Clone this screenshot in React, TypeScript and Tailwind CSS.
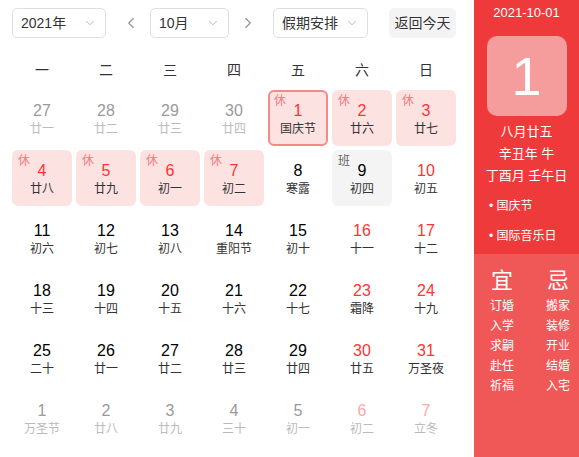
import { ChevronDown, ChevronLeft, ChevronRight } from 'lucide-react';

type Day = {
  n: number;
  lunar: string;
  kind?: 'prev' | 'next';
  red?: boolean;
  rest?: boolean;
  work?: boolean;
  selected?: boolean;
};

const weeks: Day[][] = [
  [
    { n: 27, lunar: '廿一', kind: 'prev' },
    { n: 28, lunar: '廿二', kind: 'prev' },
    { n: 29, lunar: '廿三', kind: 'prev' },
    { n: 30, lunar: '廿四', kind: 'prev' },
    { n: 1, lunar: '国庆节', red: true, rest: true, selected: true },
    { n: 2, lunar: '廿六', red: true, rest: true },
    { n: 3, lunar: '廿七', red: true, rest: true },
  ],
  [
    { n: 4, lunar: '廿八', red: true, rest: true },
    { n: 5, lunar: '廿九', red: true, rest: true },
    { n: 6, lunar: '初一', red: true, rest: true },
    { n: 7, lunar: '初二', red: true, rest: true },
    { n: 8, lunar: '寒露' },
    { n: 9, lunar: '初四', work: true },
    { n: 10, lunar: '初五', red: true },
  ],
  [
    { n: 11, lunar: '初六' },
    { n: 12, lunar: '初七' },
    { n: 13, lunar: '初八' },
    { n: 14, lunar: '重阳节' },
    { n: 15, lunar: '初十' },
    { n: 16, lunar: '十一', red: true },
    { n: 17, lunar: '十二', red: true },
  ],
  [
    { n: 18, lunar: '十三' },
    { n: 19, lunar: '十四' },
    { n: 20, lunar: '十五' },
    { n: 21, lunar: '十六' },
    { n: 22, lunar: '十七' },
    { n: 23, lunar: '霜降', red: true },
    { n: 24, lunar: '十九', red: true },
  ],
  [
    { n: 25, lunar: '二十' },
    { n: 26, lunar: '廿一' },
    { n: 27, lunar: '廿二' },
    { n: 28, lunar: '廿三' },
    { n: 29, lunar: '廿四' },
    { n: 30, lunar: '廿五', red: true },
    { n: 31, lunar: '万圣夜', red: true },
  ],
  [
    { n: 1, lunar: '万圣节', kind: 'next' },
    { n: 2, lunar: '廿八', kind: 'next' },
    { n: 3, lunar: '廿九', kind: 'next' },
    { n: 4, lunar: '三十', kind: 'next' },
    { n: 5, lunar: '初一', kind: 'next' },
    { n: 6, lunar: '初二', kind: 'next', red: true },
    { n: 7, lunar: '立冬', kind: 'next', red: true },
  ],
];

const good = ['订婚', '入学', '求嗣', '赴任', '祈福'];
const bad = ['搬家', '装修', '开业', '结婚', '入宅'];

const Select = ({ label, width }: { label: string; width: string }) => (
  <div
    className={`${width} h-[30px] flex items-center justify-between pl-[8px] pr-[8px] border border-[#dcdfe6] rounded-[5px] text-[14px] text-[#333]`}
  >
    <span>{label}</span>
    <ChevronDown size={14} strokeWidth={1.5} className="text-[#a8abb2]" />
  </div>
);

const Cell = ({ d }: { d: Day }) => {
  let box = 'border-2 border-transparent';
  if (d.rest) box = 'bg-[#fde2e2] border-2 border-[#fde2e2]';
  if (d.selected) box = 'bg-[#fde2e2] border-2 border-[#f38a8a]';
  if (d.work) box = 'bg-[#f4f4f5] border-2 border-[#f4f4f5]';

  let num = 'text-black';
  let lunar = 'text-[#333]';
  if (d.red) num = 'text-[#f33]';
  if (d.kind) {
    num = d.red ? 'text-[#fbaaaa]' : 'text-[#9a9a9a]';
    lunar = 'text-[#bbb]';
  }

  return (
    <div className={`relative m-[2px] rounded-[6px] flex flex-col items-center justify-center pt-[4px] ${box}`}>
      {d.rest && <span className="absolute top-[1px] left-[4px] text-[12px] leading-[16px] text-[#f47a7a]">休</span>}
      {d.work && <span className="absolute top-[1px] left-[4px] text-[12px] leading-[16px] text-[#666]">班</span>}
      <span className={`text-[16px] leading-[18px] ${num}`}>{d.n}</span>
      <span className={`text-[12px] leading-[18px] ${lunar}`}>{d.lunar}</span>
    </div>
  );
};

export default function App() {
  return (
    <div
      className="flex w-[579px] h-[457px] bg-white overflow-hidden"
      style={{ fontFamily: '"Liberation Sans", "Noto Sans CJK SC", sans-serif' }}
    >
      <div className="w-[474px] flex flex-col">
        <div className="flex items-center pt-[8px] pl-[12px]">
          <Select label="2021年" width="w-[94px]" />
          <div className="ml-[16px] mr-[10px] text-[#909399]">
            <ChevronLeft size={18} strokeWidth={1.5} />
          </div>
          <Select label="10月" width="w-[79px]" />
          <div className="ml-[10px] mr-[16px] text-[#909399]">
            <ChevronRight size={18} strokeWidth={1.5} />
          </div>
          <Select label="假期安排" width="w-[95px]" />
          <div className="ml-[21px] w-[67px] h-[30px] flex items-center justify-center rounded-[5px] bg-[#f4f4f5] text-[14px] text-[#333]">
            返回今天
          </div>
        </div>

        <div className="grid grid-cols-[repeat(7,64px)] px-[10px] mt-[14px] h-[36px] items-center">
          {['一', '二', '三', '四', '五', '六', '日'].map((w) => (
            <div key={w} className="text-center text-[14px] text-[#333]">
              {w}
            </div>
          ))}
        </div>

        <div className="grid grid-cols-[repeat(7,64px)] auto-rows-[60px] px-[10px]">
          {weeks.flat().map((d, i) => (
            <Cell key={i} d={d} />
          ))}
        </div>
      </div>

      <div className="w-[105px] flex flex-col text-white">
        <div className="h-[254px] bg-[#ee3a3a] flex flex-col">
          <div className="text-center text-[13px] leading-[16px] pt-[5px]">2021-10-01</div>
          <div className="mx-auto mt-[15px] w-[80px] h-[80px] rounded-[10px] bg-[#f59c9c] flex items-center justify-center text-[54px] leading-none">
            1
          </div>
          <div className="mt-[5px] text-center text-[13px] leading-[22px]">
            <div>八月廿五</div>
            <div>辛丑年 牛</div>
            <div>丁酉月 壬午日</div>
          </div>
          <div className="mt-[4px] pl-[15px] text-[12px]">
            <div className="h-[30px] flex items-center">• 国庆节</div>
            <div className="h-[30px] flex items-center">• 国际音乐日</div>
          </div>
        </div>
        <div className="flex-1 bg-[#f05757] flex pl-[16px] gap-[32px] pt-[12px]">
          <div className="flex flex-col items-center w-[24px]">
            <div className="text-[22px] leading-[30px]">宜</div>
            {good.map((t) => (
              <div key={t} className="text-[12px] leading-[20px]">
                {t}
              </div>
            ))}
          </div>
          <div className="flex flex-col items-center w-[24px]">
            <div className="text-[22px] leading-[30px]">忌</div>
            {bad.map((t) => (
              <div key={t} className="text-[12px] leading-[20px]">
                {t}
              </div>
            ))}
          </div>
        </div>
      </div>
    </div>
  );
}
